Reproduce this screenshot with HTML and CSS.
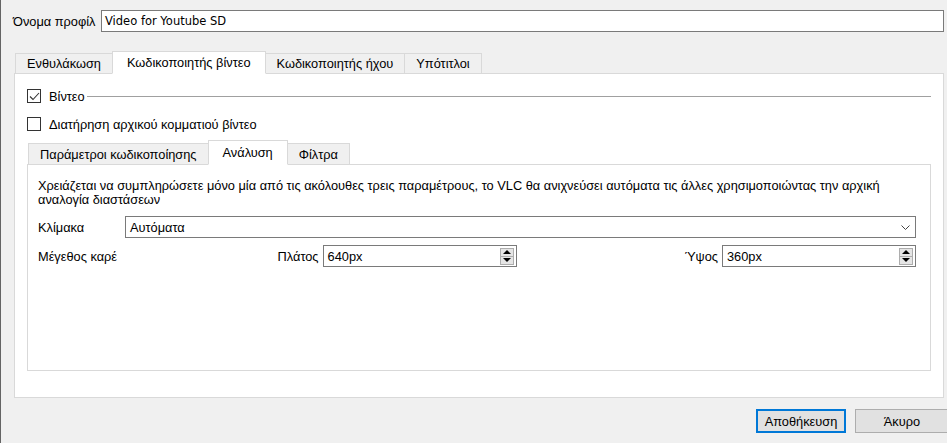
FILE: index.html
```html
<!DOCTYPE html>
<html lang="el">

<head>
    <meta charset="UTF-8">
    <title>Προφίλ μετατροπής</title>
    <link rel="stylesheet" href="styles.css">
</head>

<body>
    <div class="window">
        <div class="profile-row">
            <span class="profile-label">Όνομα προφίλ</span>
            <div class="field profile-field">Video for Youtube SD</div>
        </div>

        <div class="tabs outer">
            <div class="tab-bar">
                <span class="tab">Ενθυλάκωση</span>
                <span class="tab active">Κωδικοποιητής βίντεο</span>
                <span class="tab">Κωδικοποιητής ήχου</span>
                <span class="tab">Υπότιτλοι</span>
            </div>
            <div class="pane outer-pane">
                <div class="group-row">
                    <span class="checkbox checked">
                        <svg width="13" height="13" viewBox="0 0 13 13">
                            <polyline points="2,6.5 5,9.5 11,3" fill="none" stroke="#333" stroke-width="1.1" />
                        </svg>
                    </span>
                    <span>Βίντεο</span>
                    <span class="group-line"></span>
                </div>
                <div class="check-row">
                    <span class="checkbox"></span>
                    <span>Διατήρηση αρχικού κομματιού βίντεο</span>
                </div>

                <div class="tabs inner">
                    <div class="tab-bar">
                        <span class="tab">Παράμετροι κωδικοποίησης</span>
                        <span class="tab active">Ανάλυση</span>
                        <span class="tab">Φίλτρα</span>
                    </div>
                    <div class="pane inner-pane">
                        <p class="hint">Χρειάζεται να συμπληρώσετε μόνο μία από τις ακόλουθες τρεις παραμέτρους, το VLC θα ανιχνεύσει αυτόματα τις άλλες χρησιμοποιώντας την αρχική<br>αναλογία διαστάσεων</p>

                        <div class="scale-row">
                            <span class="row-label">Κλίμακα</span>
                            <div class="field combo">
                                <span>Αυτόματα</span>
                                <svg class="chevron" width="9" height="5" viewBox="0 0 9 5">
                                    <polyline points="0.5,0.5 4.5,4.5 8.5,0.5" fill="none" stroke="#444" stroke-width="1" />
                                </svg>
                            </div>
                        </div>

                        <div class="size-row">
                            <span class="row-label">Μέγεθος καρέ</span>
                            <span class="side-label">Πλάτος</span>
                            <div class="field spin">
                                <span>640px</span>
                                <span class="spin-buttons">
                                    <span class="spin-btn"><span class="arrow up"></span></span>
                                    <span class="spin-btn"><span class="arrow down"></span></span>
                                </span>
                            </div>
                            <span class="side-label">Ύψος</span>
                            <div class="field spin">
                                <span>360px</span>
                                <span class="spin-buttons">
                                    <span class="spin-btn"><span class="arrow up"></span></span>
                                    <span class="spin-btn"><span class="arrow down"></span></span>
                                </span>
                            </div>
                        </div>
                    </div>
                </div>
            </div>
        </div>

        <div class="buttons">
            <button class="btn default">Αποθήκευση</button>
            <button class="btn">Άκυρο</button>
        </div>
    </div>
</body>

</html>
```

FILE: styles.css
```css
* {
    box-sizing: border-box;
}

body {
    margin: 0;
    background: #f0f0f0;
    font-family: "Liberation Sans", Arial, sans-serif;
    font-size: 12.8px;
    color: #000;
    overflow: hidden;
}

.window {
    height: 443px;
    border-left: 1px solid #646464;
    display: flex;
    flex-direction: column;
}

.profile-row {
    display: flex;
    align-items: center;
    margin-top: 10px;
    padding-left: 12px;
    padding-right: 3px;
}

.profile-label {
    width: 88px;
}

.field {
    height: 22px;
    border: 1px solid #7a7a7a;
    background: #fff;
    display: flex;
    align-items: center;
    padding-left: 4px;
}

.profile-field {
    flex: 1;
    padding-left: 3px;
    font-family: "DejaVu Sans", sans-serif;
    font-size: 11.5px;
}

/* tabs */
.tabs.outer {
    margin: 19px 3px 0 13px;
}

.tab-bar {
    display: flex;
    align-items: flex-end;
    position: relative;
    z-index: 1;
    margin-bottom: -1px;
    padding-left: 1px;
}

.tab {
    height: 21px;
    border: 1px solid #d9d9d9;
    margin-right: -1px;
    background: #f0f0f0;
    display: flex;
    align-items: center;
    justify-content: center;
}

.tab.active {
    height: 23px;
    background: #fff;
    border-bottom-color: #fff;
    position: relative;
}

.outer .tab {
    padding: 0 11px;
}

.outer .tab.active {
    padding: 0 14px;
}

.pane {
    border: 1px solid #d9d9d9;
    background: #fff;
}

.outer-pane {
    height: 325px;
    padding: 15px 12px 0 12px;
}

.group-row,
.check-row {
    display: flex;
    align-items: center;
    height: 14px;
    gap: 8px;
}

.check-row {
    margin-top: 14px;
}

.checkbox {
    width: 14px;
    height: 14px;
    border: 1px solid #333;
    background: #fff;
    display: flex;
}

.checkbox svg {
    margin: -0.5px;
}

.group-line {
    flex: 1;
    height: 1px;
    background: #a0a0a0;
    margin-left: -6px;
}

/* inner tabs */
.tabs.inner {
    margin-top: 9px;
}

.inner .tab {
    height: 22px;
    padding: 0 11px;
}

.inner .tab.active {
    height: 25px;
    padding: 0 14px;
}

.inner-pane {
    height: 207px;
    padding: 14px 14px 0 10px;
}

.hint {
    margin: 0;
    line-height: 14px;
}

.scale-row {
    display: flex;
    align-items: center;
    margin-top: 9px;
}

.row-label {
    width: 87px;
}

.combo {
    flex: 1;
    justify-content: space-between;
    padding-right: 5px;
}

.size-row {
    display: grid;
    grid-template-columns: 87px 1fr 194px 1.04fr 194px;
    align-items: center;
    margin-top: 7px;
}

.side-label {
    text-align: right;
    padding-right: 4px;
}

.spin {
    justify-content: space-between;
    padding-right: 2px;
}

.spin-buttons {
    display: flex;
    flex-direction: column;
}

.spin-btn {
    width: 14px;
    height: 9px;
    border: 1px solid #adadad;
    background: #e5e5e5;
    display: flex;
    align-items: center;
    justify-content: center;
}

.spin-btn + .spin-btn {
    margin-top: -1px;
}

.arrow {
    width: 0;
    height: 0;
    border-left: 4px solid transparent;
    border-right: 4px solid transparent;
}

.arrow.up {
    border-bottom: 4px solid #000;
}

.arrow.down {
    border-top: 4px solid #000;
}

/* dialog buttons */
.buttons {
    display: flex;
    justify-content: flex-end;
    gap: 9px;
    margin-top: 11px;
    margin-right: -2px;
}

.btn {
    height: 24px;
    width: 94px;
    font: inherit;
    color: #000;
    background: #e1e1e1;
    border: 1px solid #adadad;
    padding: 0;
}

.btn.default {
    width: 90px;
    border: 2px solid #0078d7;
}
```
